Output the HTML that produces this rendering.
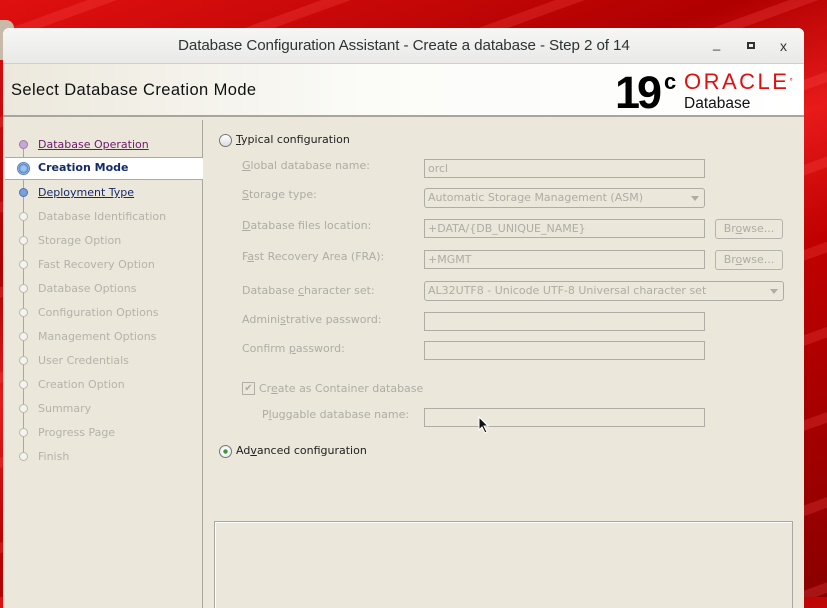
<!DOCTYPE html>
<html><head><meta charset="utf-8">
<style>
*{margin:0;padding:0;box-sizing:border-box}
body{width:827px;height:597px;overflow:hidden;position:relative;font-family:"DejaVu Sans",sans-serif;
background:linear-gradient(160deg,#e01010 0%,#b00000 30%,#e81a1a 45%,#c00000 60%,#8a0000 100%);}
.bg2{position:absolute;left:0;top:0;width:827px;height:597px;
background:repeating-linear-gradient(160deg,rgba(255,255,255,0) 0 30px,rgba(255,80,80,.25) 30px 40px,rgba(0,0,0,0) 40px 80px);}
.corner{position:absolute;left:0;top:20px;width:14px;height:40px;background:#c9b9a8;border-radius:0 8px 0 0}
.win{position:absolute;left:3px;top:28px;width:801px;height:580px;background:#ebe7da;border-radius:6px 6px 0 0;overflow:hidden}
.title{height:36px;background:linear-gradient(#f6f6f5,#e9e9e7);border-bottom:1px solid #cfcfcf;font-family:"Liberation Sans",sans-serif;font-size:15.2px;color:#2e3436;text-align:center;line-height:36px;position:relative}
.title .t{position:absolute;left:175px;top:0;letter-spacing:-.1px}
.ctl{position:absolute;top:0;font-size:13px;color:#2e3436}
.hdr{position:absolute;top:36px;left:0;width:801px;height:53px;background:linear-gradient(90deg,#ece8dc 0%,#fbfbf8 45%,#fff 100%);border-bottom:2px solid #a8a69c}
.hdr .h{position:absolute;left:8px;top:17px;font-size:16.5px;color:#111;font-family:"Liberation Sans",sans-serif;letter-spacing:.4px}
.n19{position:absolute;left:612px;top:5px;font-family:"Liberation Sans",sans-serif;font-weight:bold;font-size:45px;letter-spacing:-3px;color:#000;line-height:48px}
.c{position:absolute;left:661px;top:5px;font-family:"Liberation Sans",sans-serif;font-weight:bold;font-size:22px;color:#000}
.orc{position:absolute;left:681px;top:7px;font-family:"Liberation Sans",sans-serif;font-size:22px;color:#e01010;letter-spacing:2.5px;line-height:22px}
.dbt{position:absolute;left:681px;top:31px;font-family:"Liberation Sans",sans-serif;font-size:15.5px;color:#111}
.left{position:absolute;left:2px;top:92px;width:198px;height:500px;border-right:1px solid #a9a69c}
.step{position:absolute;left:33px;font-size:11px;color:#b4b2aa;white-space:nowrap}
.vline{position:absolute;left:18px;top:25px;width:1px;height:312px;background:#a9a7a0}
.dot{position:absolute;left:14px;width:9px;height:9px;border-radius:50%;background:#f4f3ee;border:1px solid #b9b7b0}
.sel{position:absolute;left:0;top:37px;width:198px;height:23px;background:#fff;border-top:1px solid #aaa;border-bottom:1px solid #aaa}
.lbl{position:absolute;font-size:11px;color:#aeaca4;white-space:nowrap}
.box{position:absolute;height:19px;border:1px solid #aeaca4;font-size:11px;color:#aeaca4;padding:2px 3px;white-space:nowrap;line-height:13px}
.btn{position:absolute;height:20px;width:68px;border:1px solid #b5b3ab;border-radius:3px;font-size:11px;color:#aeaca4;text-align:center;line-height:18px}
.arr{position:absolute;right:5px;top:7px;width:0;height:0;border-left:4px solid transparent;border-right:4px solid transparent;border-top:5px solid #aeaca4}
.radio{position:absolute;width:13px;height:13px;border-radius:50%;border:1px solid #777;background:linear-gradient(#fff,#ddd)}
u{text-decoration:underline}
</style></head><body>
<div class="bg2"></div>
<div class="corner"></div>
<div class="win">
 <div class="title"><span class="t">Database Configuration Assistant - Create a database - Step 2 of 14</span>
  <span class="ctl" style="left:710px;top:-2px">_</span>
  <span style="position:absolute;left:744px;top:14px;width:8px;height:7px;border:2px solid #2e3436"></span>
  <span class="ctl" style="left:777px;font-size:14px">x</span></div>
 <div class="hdr"><div class="h">Select Database Creation Mode</div>
  <div class="n19">19</div><div class="c">c</div><div class="orc">ORACLE<span style="font-size:8px;vertical-align:top">°</span></div><div class="dbt">Database</div></div>
 <div class="left">
  <div class="vline"></div>
  <div class="sel"></div>
  <div class="dot" style="top:20px;background:#c7a8d4;border-color:#9a7aa8"></div>
  <div class="step" style="top:18px;color:#6b1a6b;text-decoration:underline">Database Operation</div>
  <div class="dot" style="top:42px;left:12px;width:13px;height:13px;background:radial-gradient(#9ec3f0 30%,#4a86d0 60%,#dde 70%);border-color:#5a7fb5"></div>
  <div class="step" style="top:41px;color:#152a6b;font-weight:bold">Creation Mode</div>
  <div class="dot" style="top:68px;background:#7aa0dc;border-color:#4a70b0"></div>
  <div class="step" style="top:66px;color:#152a6b;text-decoration:underline">Deployment Type</div>
  <div class="dot" style="top:92px"></div><div class="step" style="top:90px">Database Identification</div>
  <div class="dot" style="top:116px"></div><div class="step" style="top:114px">Storage Option</div>
  <div class="dot" style="top:140px"></div><div class="step" style="top:138px">Fast Recovery Option</div>
  <div class="dot" style="top:164px"></div><div class="step" style="top:162px">Database Options</div>
  <div class="dot" style="top:188px"></div><div class="step" style="top:186px">Configuration Options</div>
  <div class="dot" style="top:212px"></div><div class="step" style="top:210px">Management Options</div>
  <div class="dot" style="top:236px"></div><div class="step" style="top:234px">User Credentials</div>
  <div class="dot" style="top:260px"></div><div class="step" style="top:258px">Creation Option</div>
  <div class="dot" style="top:284px"></div><div class="step" style="top:282px">Summary</div>
  <div class="dot" style="top:308px"></div><div class="step" style="top:306px">Progress Page</div>
  <div class="dot" style="top:332px"></div><div class="step" style="top:330px">Finish</div>
 </div>
 <div class="radio" style="left:216px;top:106px"></div>
 <div class="lbl" style="left:233px;top:105px;color:#222"><u>T</u>ypical configuration</div>
 <div class="lbl" style="left:239px;top:131px"><u>G</u>lobal database name:</div>
 <div class="box" style="left:421px;top:131px;width:281px">orcl</div>
 <div class="lbl" style="left:239px;top:160px"><u>S</u>torage type:</div>
 <div class="box" style="left:421px;top:160px;width:281px;border-radius:3px;height:20px;line-height:14px">Automatic Storage Management (ASM)<div class="arr"></div></div>
 <div class="lbl" style="left:239px;top:191px"><u>D</u>atabase files location:</div>
 <div class="box" style="left:421px;top:191px;width:281px">+DATA/{DB_UNIQUE_NAME}</div>
 <div class="btn" style="left:712px;top:191px">Br<u>o</u>wse...</div>
 <div class="lbl" style="left:239px;top:222px">F<u>a</u>st Recovery Area (FRA):</div>
 <div class="box" style="left:421px;top:222px;width:281px">+MGMT</div>
 <div class="btn" style="left:712px;top:222px">Br<u>o</u>wse...</div>
 <div class="lbl" style="left:239px;top:256px">Database <u>c</u>haracter set:</div>
 <div class="box" style="left:421px;top:253px;width:360px;border-radius:3px;height:20px;line-height:14px">AL32UTF8 - Unicode UTF-8 Universal character set<div class="arr"></div></div>
 <div class="lbl" style="left:239px;top:285px">Admini<u>s</u>trative password:</div>
 <div class="box" style="left:421px;top:284px;width:281px"></div>
 <div class="lbl" style="left:239px;top:314px">Confirm <u>p</u>assword:</div>
 <div class="box" style="left:421px;top:313px;width:281px"></div>
 <div style="position:absolute;left:239px;top:354px;width:13px;height:13px;border:1px solid #b0aea6;color:#aeaca4;font-size:10px;line-height:11px;text-align:center">✔</div>
 <div class="lbl" style="left:256px;top:354px">Cr<u>e</u>ate as Container database</div>
 <div class="lbl" style="left:259px;top:380px">P<u>l</u>uggable database name:</div>
 <div class="box" style="left:421px;top:380px;width:281px"></div>
 <div class="radio" style="left:216px;top:417px;background:radial-gradient(#3a9a3a 25%,#fff 32%,#ddd)"></div>
 <div class="lbl" style="left:233px;top:416px;color:#222">Ad<u>v</u>anced configuration</div>
 <div style="position:absolute;left:211px;top:493px;width:579px;height:100px;border:1px solid #a9a7a0;box-shadow:inset 1px 1px 0 #fff"></div>
 <svg style="position:absolute;left:475px;top:388px" width="12" height="18" viewBox="0 0 12 18"><path d="M1 1 L1 14 L4 11 L7 17 L9 16 L6 10 L10 10 Z" fill="#111" stroke="#fff" stroke-width="1"/></svg>
</div>
</body></html>
